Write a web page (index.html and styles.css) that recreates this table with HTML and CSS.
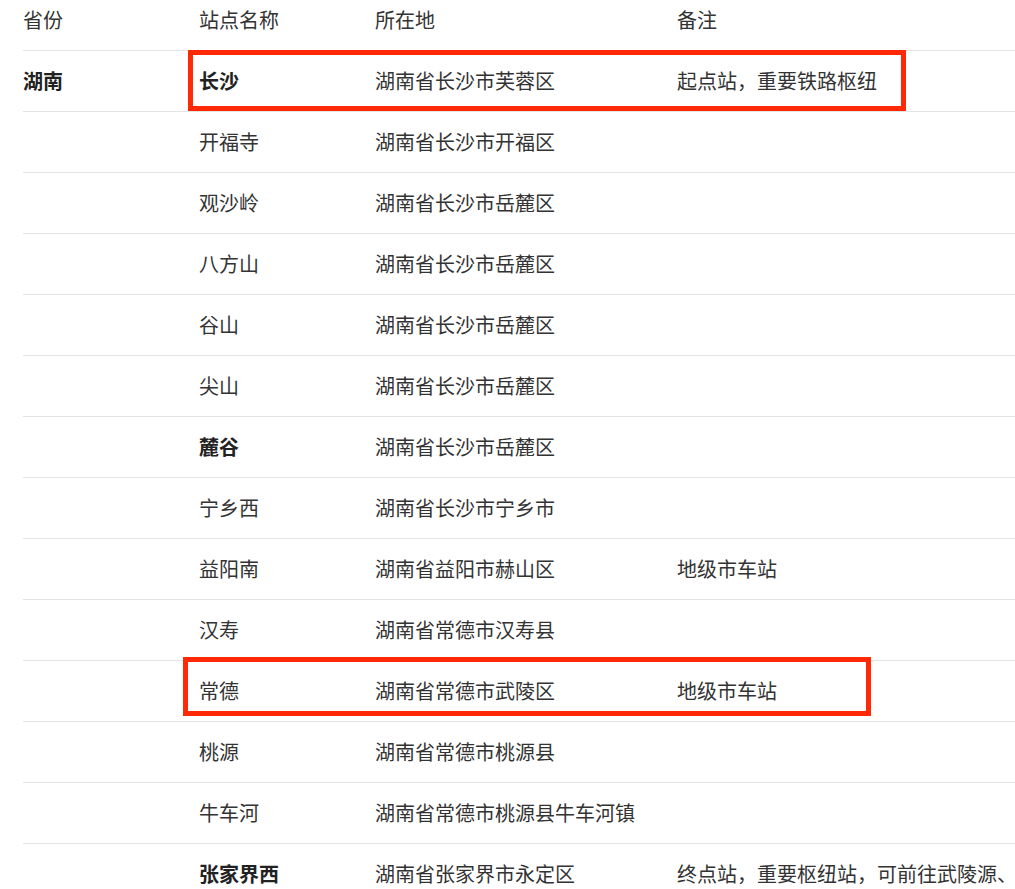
FILE: index.html
```html
<!DOCTYPE html>
<html lang="zh-CN">
<head>
<meta charset="utf-8">
<title>湖南站点</title>
<link rel="stylesheet" href="styles.css">
</head>
<body>
<div class="page">
  <table class="stations">
    <thead>
      <tr><th>省份</th><th>站点名称</th><th>所在地</th><th>备注</th></tr>
    </thead>
    <tbody>
      <tr><td class="b">湖南</td><td class="b">长沙</td><td>湖南省长沙市芙蓉区</td><td>起点站，重要铁路枢纽</td></tr>
      <tr><td></td><td>开福寺</td><td>湖南省长沙市开福区</td><td></td></tr>
      <tr><td></td><td>观沙岭</td><td>湖南省长沙市岳麓区</td><td></td></tr>
      <tr><td></td><td>八方山</td><td>湖南省长沙市岳麓区</td><td></td></tr>
      <tr><td></td><td>谷山</td><td>湖南省长沙市岳麓区</td><td></td></tr>
      <tr><td></td><td>尖山</td><td>湖南省长沙市岳麓区</td><td></td></tr>
      <tr><td></td><td class="b">麓谷</td><td>湖南省长沙市岳麓区</td><td></td></tr>
      <tr><td></td><td>宁乡西</td><td>湖南省长沙市宁乡市</td><td></td></tr>
      <tr><td></td><td>益阳南</td><td>湖南省益阳市赫山区</td><td>地级市车站</td></tr>
      <tr><td></td><td>汉寿</td><td>湖南省常德市汉寿县</td><td></td></tr>
      <tr><td></td><td>常德</td><td>湖南省常德市武陵区</td><td>地级市车站</td></tr>
      <tr><td></td><td>桃源</td><td>湖南省常德市桃源县</td><td></td></tr>
      <tr><td></td><td>牛车河</td><td>湖南省常德市桃源县牛车河镇</td><td></td></tr>
      <tr><td></td><td class="b">张家界西</td><td>湖南省张家界市永定区</td><td>终点站，重要枢纽站，可前往武陵源、天门山等景区</td></tr>
    </tbody>
  </table>
  <div class="mark mark-1"></div>
  <div class="mark mark-2"></div>
</div>
</body>
</html>
```

FILE: styles.css
```css
html, body {
  margin: 0;
  padding: 0;
  background: #ffffff;
}

body {
  font-family: "Noto Sans CJK SC", "Noto Sans", sans-serif;
  color: #333333;
}

.page {
  position: relative;
  width: 1015px;
  height: 889px;
  overflow: hidden;
}

.stations {
  margin: -10px 0 0 23px;
  border-collapse: collapse;
  table-layout: fixed;
  width: 1200px;
  font-size: 20px;
}

.stations th,
.stations td {
  height: 60px;
  padding: 0;
  text-align: left;
  vertical-align: middle;
  white-space: nowrap;
  font-weight: normal;
  border-bottom: 1px solid #e4e4e4;
  line-height: 24px;
}

.stations th:nth-child(1) { width: 176px; }
.stations th:nth-child(2) { width: 176px; }
.stations th:nth-child(3) { width: 302px; }

.stations td.b {
  font-weight: 700;
  color: #222222;
}

.mark {
  position: absolute;
  border: 5px solid #ff2a05;
  box-sizing: border-box;
}

.mark-1 {
  left: 188px;
  top: 50px;
  width: 718px;
  height: 61px;
}

.mark-2 {
  left: 183px;
  top: 657px;
  width: 688px;
  height: 59px;
}
```
